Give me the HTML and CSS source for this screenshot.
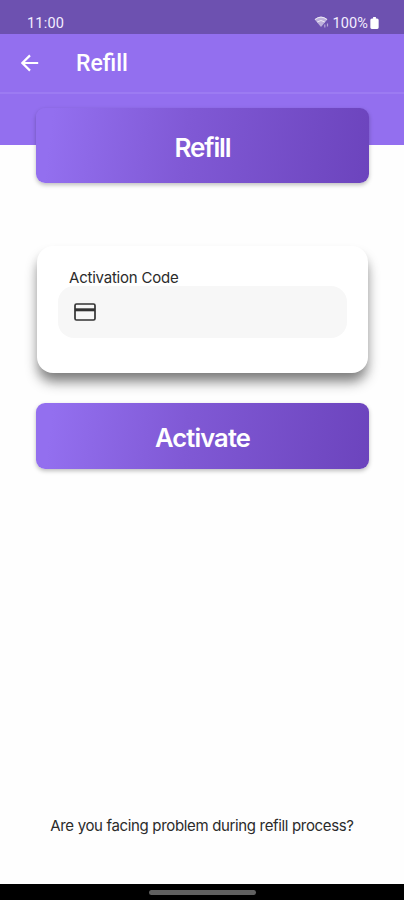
FILE: index.html
```
<!DOCTYPE html>
<html lang="en">
<head>
<meta charset="utf-8">
<meta name="viewport" content="width=device-width, initial-scale=1">
<title>Refill</title>
<link rel="stylesheet" href="styles.css">
</head>
<body>
<div class="screen">
  <div class="status">
    <span class="time">11:00</span>
    <div class="indicators">
      <svg class="wifi" viewBox="0 0 16 13" aria-hidden="true">
        <path d="M.5 3.300Q7-2.300 13.500 3.300L7 11Z" fill="#fff" opacity=".55"/>
        <path d="M1 3.500Q7-1.200 13 3.500M3.200 6Q7 3 10.800 6" fill="none" stroke="#fff" stroke-width="1" opacity=".7"/>
        <path d="M10.800 8.500v3M13.500 7.500v3" stroke="#fff" stroke-width="1.200" opacity=".5"/>
      </svg>
      <span class="percent">100%</span>
      <svg class="battery" viewBox="0 0 9 13" aria-hidden="true"><path d="M3 0h3v1.500h1.200Q9 1.500 9 3.300V11.500Q9 13 7.500 13h-6Q0 13 0 11.500V3.300Q0 1.500 1.800 1.500H3Z" fill="#fff"/></svg>
    </div>
  </div>
  <header class="appbar">
    <svg class="back" viewBox="0 0 18 18" aria-hidden="true"><path d="M17.200 9H1.500M9 1.400 1.400 9 9 16.600" fill="none" stroke="#fff" stroke-width="2.200"/></svg>
    <h1 class="title">Refill</h1>
  </header>
  <div class="band"></div>
  <main class="content">
    <div class="banner"><span>Refill</span></div>
    <section class="card">
      <label class="label" for="code">Activation Code</label>
      <div class="field">
        <svg class="cardicon" viewBox="0 0 22 18" aria-hidden="true"><rect x="1" y="1" width="20" height="16" rx="1.500" fill="none" stroke="#333" stroke-width="1.700"/><path d="M1 6.800h20" stroke="#333" stroke-width="3"/></svg>
        <input class="input" id="code" type="text">
      </div>
    </section>
    <button class="activate" type="button"><span>Activate</span></button>
    <p class="help">Are you facing problem during refill process?</p>
  </main>
  <div class="navbar"><div class="handle"></div></div>
</div>
</body>
</html>
```
FILE: styles.css
```
* { box-sizing: border-box; }
body { margin: 0; background: #fefefe; font-family: Inter, sans-serif; }
.screen { width: 404px; height: 900px; display: flex; flex-direction: column; overflow: hidden; background: #fefefe; }
.status {
  height: 34px; flex: none; padding: 13px 25px 0 27px;
  display: flex; justify-content: space-between; align-items: flex-start;
  background: #6d51b0; color: #f3edff;
  font: 400 14.5px/22px Roboto, sans-serif;
}
.time { letter-spacing: .2px; }
.indicators { display: flex; align-items: flex-start; }
.wifi { width: 16px; height: 13px; margin: 3px 3px 0 0; }
.percent { letter-spacing: .1px; }
.battery { width: 9px; height: 12px; margin: 4px 0 0 2px; }
.appbar {
  height: 60px; flex: none; padding: 0 0 0 21px;
  display: flex; align-items: center; gap: 37px;
  background: #936fef; border-bottom: 2px solid #9c7bf2;
}
.back { width: 18px; height: 18px; }
.title { margin: 0; padding-top: 1px; color: #fff; font: 500 23px/30px Roboto, sans-serif; }
.band { height: 51px; flex: none; background: #936fef; }
.content { flex: 1; padding: 0 35px; margin-top: -37px; display: flex; flex-direction: column; }
.banner, .activate {
  width: 333px; margin: 0 0 0 1px; padding: 0; border: 0; border-radius: 9px;
  display: flex; align-items: center; justify-content: center;
  background: linear-gradient(97deg, #936fef 5%, #8059d5 45%, #6c44bd 100%);
  box-shadow: 0 2px 4px rgba(0, 0, 0, .26);
  color: #fff; font: 600 26px/32px Inter, sans-serif;
}
.banner { height: 75px; flex: none; padding-top: 4px; letter-spacing: -1.1px; }
.card {
  width: 331px; height: 127px; flex: none; margin: 63px 0 0 2px; padding: 22px 21px 0;
  border-radius: 16px; background: #fff;
  box-shadow: 0 10px 14px -2px rgba(0, 0, 0, .48), 0 8px 10px rgba(0, 0, 0, .1);
}
.label { display: block; margin-left: 11px; color: #2b2b2b; font-size: 15px; line-height: 20px; margin-bottom: -2px; letter-spacing: -.22px; }
.field { height: 52px; border-radius: 16px; background: #f7f7f7; display: flex; align-items: center; padding: 0 16px; gap: 12px; }
.cardicon { width: 22px; height: 18px; }
.input { min-width: 0; flex: 1; border: 0; outline: 0; background: transparent; font: 15px Inter, sans-serif; }
.activate { height: 66px; flex: none; margin-top: 30px; padding-top: 4px; font-size: 25.5px; letter-spacing: -.85px; }
.help { margin: auto 0 48px; color: #2b2b2b; text-align: center; white-space: nowrap; font-size: 15px; line-height: 20px; letter-spacing: -.34px; }
.navbar { height: 16px; flex: none; background: #000; display: flex; align-items: center; justify-content: center; }
.handle { width: 107px; height: 5px; border-radius: 3px; background: #606060; }
```
